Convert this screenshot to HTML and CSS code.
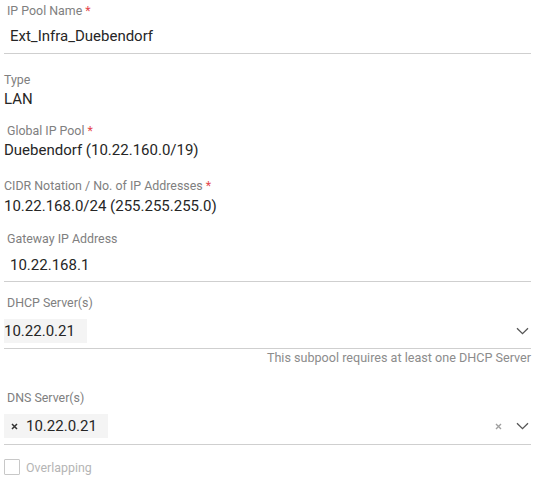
FILE: index.html
```html
<!DOCTYPE html>
<html>
<head>
<meta charset="utf-8">
<link rel="stylesheet" href="styles.css">
</head>
<body>
<form class="form">
  <div class="field">
    <div class="label indent">IP Pool Name <span class="req">*</span></div>
    <div class="input input-name"><span class="val">Ext_Infra_Duebendorf</span></div>
  </div>
  <div class="field f-type">
    <div class="label">Type</div>
    <div class="static s-type">LAN</div>
  </div>
  <div class="field f-global">
    <div class="label indent">Global IP Pool <span class="req">*</span></div>
    <div class="static s-global">Duebendorf (10.22.160.0/19)</div>
  </div>
  <div class="field f-cidr">
    <div class="label">CIDR Notation / No. of IP Addresses <span class="req">*</span></div>
    <div class="static s-cidr">10.22.168.0/24 (255.255.255.0)</div>
  </div>
  <div class="field f-gw">
    <div class="label indent">Gateway IP Address</div>
    <div class="input input-gw"><span class="val">10.22.168.1</span></div>
  </div>
  <div class="field f-dhcp">
    <div class="label indent">DHCP Server(s)</div>
    <div class="select">
      <span class="chip">10.22.0.21</span>
      <span class="icons">
        <svg class="chev" width="13" height="8" viewBox="0 0 13 8"><path d="M1 1.2l5.5 5.4 5.5-5.4" fill="none" stroke="#555" stroke-width="1.3"/></svg>
      </span>
    </div>
    <div class="help">This subpool requires at least one DHCP Server</div>
  </div>
  <div class="field f-dns">
    <div class="label indent">DNS Server(s)</div>
    <div class="select select-dns">
      <span class="chip chip-x">
        <svg class="x" width="7" height="7" viewBox="0 0 7 7"><path d="M1 1l5 5M6 1l-5 5" stroke="#333" stroke-width="1.5"/></svg>
        <span>10.22.0.21</span>
      </span>
      <span class="icons">
        <svg class="clear" width="7" height="7" viewBox="0 0 7 7"><path d="M1 1l5 5M6 1l-5 5" stroke="#a0a0a0" stroke-width="1.4"/></svg>
        <svg class="chev" width="13" height="8" viewBox="0 0 13 8"><path d="M1 1.2l5.5 5.4 5.5-5.4" fill="none" stroke="#555" stroke-width="1.3"/></svg>
      </span>
    </div>
  </div>
  <label class="check">
    <span class="box"></span>
    <span class="check-label">Overlapping</span>
  </label>
</form>
</body>
</html>
```
FILE: styles.css
```css
html, body {
  margin: 0;
  padding: 0;
  background: #fff;
}
body {
  font-family: Roboto, "Liberation Sans", Arial, sans-serif;
  color: #2b2b2b;
}
.form {
  display: flex;
  flex-direction: column;
  padding: 4px 4px 0 4px;
}
.field {
  display: flex;
  flex-direction: column;
}
.label {
  font-size: 12.4px;
  line-height: 14px;
  height: 14px;
  color: #808080;
  white-space: nowrap;
}
.indent { padding-left: 3px; }
.req { color: #e5484d; }
.input {
  border-bottom: 1px solid #cfcfcf;
  display: flex;
  align-items: center;
  font-size: 15px;
  line-height: 18px;
  color: #262626;
}
.input-name {
  height: 34px;
  padding: 1px 0 0 6px;
}
.input-gw {
  height: 32px;
  padding: 3px 0 0 6px;
}
.static {
  font-size: 15px;
  line-height: 18px;
  height: 18px;
  color: #262626;
}
.s-type { margin-top: 3px; }
.s-global { margin-top: 3px; }
.s-cidr { margin-top: 4px; }
.f-type { margin-top: 19px; }
.f-global { margin-top: 16px; }
.f-cidr { margin-top: 20px; }
.f-gw { margin-top: 17px; }
.f-dhcp { margin-top: 14px; }
.f-dns { margin-top: 26px; }
.select {
  margin-top: 9px;
  padding-bottom: 5px;
  border-bottom: 1px solid #cfcfcf;
  display: flex;
  align-items: center;
  justify-content: space-between;
}
.select-dns { padding-bottom: 6px; }
.chip {
  background: #f4f4f4;
  height: 24px;
  display: flex;
  align-items: center;
  padding: 0 12px 0 0;
  font-size: 15px;
  color: #262626;
}
.chip-x { padding: 0 11px 0 7px; }
.chip-x .x {
  margin-right: 8px;
}
.icons {
  display: flex;
  align-items: center;
  gap: 14px;
  padding-right: 2px;
}
.help {
  align-self: flex-end;
  font-size: 12.6px;
  line-height: 14px;
  color: #8c8c8c;
  margin-top: 2px;
  white-space: nowrap;
}
.check {
  display: flex;
  align-items: center;
  gap: 6px;
  margin-top: 14px;
}
.box {
  width: 14px;
  height: 14px;
  border: 1px solid #c8c8c8;
  border-radius: 1px;
}
.check-label {
  font-size: 12.4px;
  color: #b5b5b5;
}
```
